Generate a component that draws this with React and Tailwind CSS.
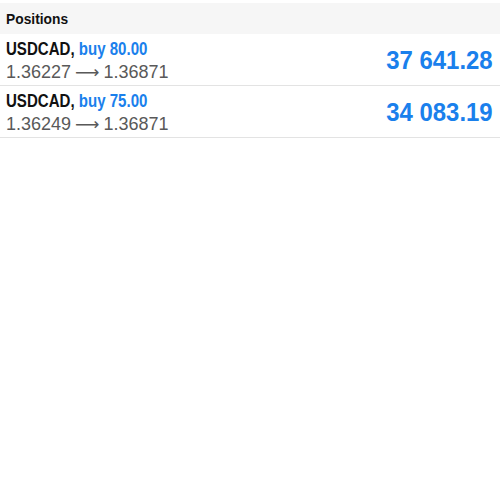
export default function App() {
  const rows = [
    { sym: "USDCAD", side: "buy 80.00", open: "1.36227", cur: "1.36871", profit: "37 641.28" },
    { sym: "USDCAD", side: "buy 75.00", open: "1.36249", cur: "1.36871", profit: "34 083.19" },
  ];
  return (
    <div className="w-[500px] h-[500px] bg-white pt-[3px] font-['Liberation_Sans',Arial,sans-serif]">
      <div className="h-[31px] bg-[#f6f6f6] px-[6px] flex items-center">
        <span className="inline-block origin-left scale-x-[0.89] font-bold text-[15.5px] text-[#111] pt-[1px]">Positions</span>
      </div>
      {rows.map((r, i) => (
        <div key={i} className="h-[52px] border-b border-[#e3e3e3] pl-[6px] pr-[7px] flex items-center justify-between">
          <div className="flex flex-col pt-[2px]">
            <div className="inline-block origin-left scale-x-[0.86] whitespace-nowrap text-[17.5px] leading-[23px] font-bold">
              <span className="text-[#111]">{r.sym},</span>{" "}
              <span className="text-[#1a80ec]">{r.side}</span>
            </div>
            <div className="text-[18px] leading-[23px] text-[#595959] whitespace-nowrap">
              {r.open}
              <span className="font-['DejaVu_Sans',sans-serif] text-[17px] mx-[4px]">⟶</span>
              {r.cur}
            </div>
          </div>
          <div className="inline-block origin-right scale-x-[0.92] text-[26px] font-bold text-[#1a80ec] whitespace-nowrap pt-[2px]">{r.profit}</div>
        </div>
      ))}
    </div>
  );
}
